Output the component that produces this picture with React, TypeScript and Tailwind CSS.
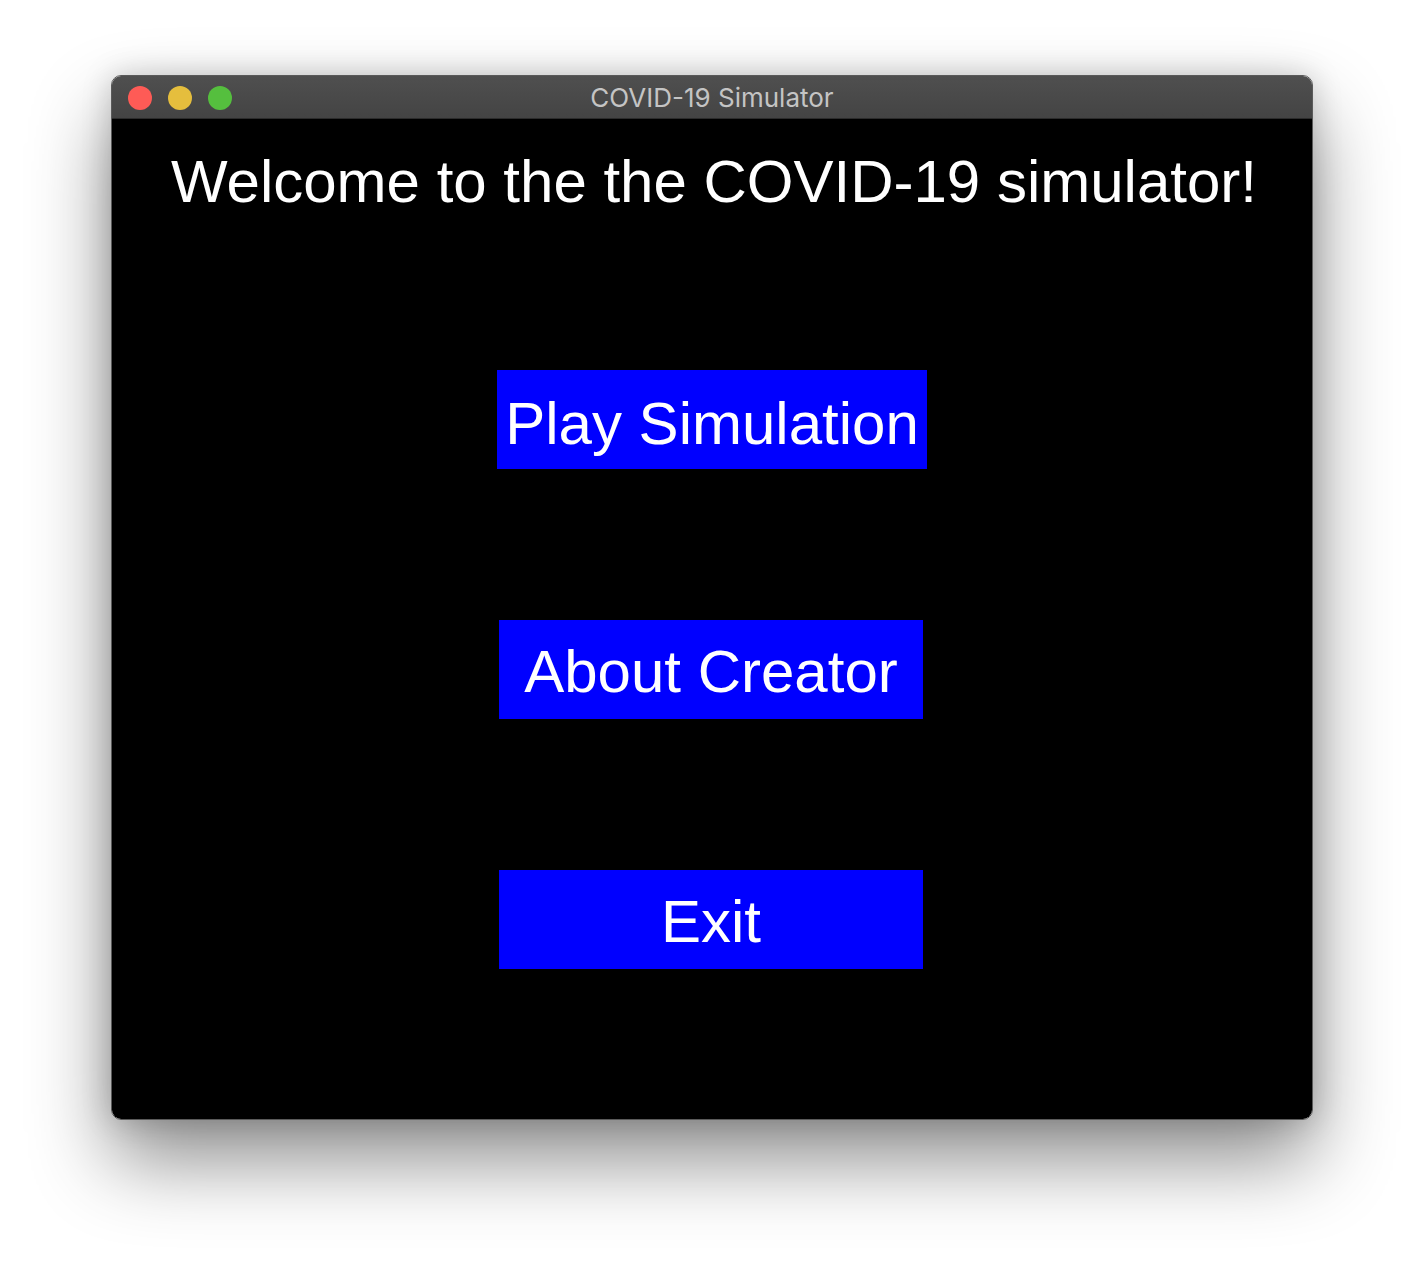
import React from "react";

const arial = { fontFamily: '"Liberation Sans", Arial, sans-serif' };

function MenuButton({ label, width, nudge }: { label: string; width: string; nudge: string }) {
    return (
        <button
            className={`${width} ${nudge} h-[99px] bg-[#0000ff] text-white text-[60px] leading-none flex items-center justify-center cursor-pointer`}
            style={arial}
        >
            {label}
        </button>
    );
}

export default function App() {
    return (
        <div className="w-[1424px] h-[1268px] bg-white pt-[75px] overflow-hidden">
            {/* window */}
            <div className="mx-auto w-[1202px] h-[1045px] rounded-[10px] border border-[#5a5a5a] overflow-hidden flex flex-col shadow-[0_40px_80px_rgba(0,0,0,0.45),0_0_30px_rgba(0,0,0,0.18)]">
                {/* title bar */}
                <div className="h-[43px] shrink-0 grid grid-cols-[1fr_auto_1fr] items-center bg-gradient-to-b from-[#4f4f4f] to-[#444444] border-b border-[#2c2c2c]">
                    <div className="flex items-center gap-[16px] pl-[16px] pt-[1px]">
                        <span className="w-[24px] h-[24px] rounded-full bg-[#fe5b56]" />
                        <span className="w-[24px] h-[24px] rounded-full bg-[#e5be3d]" />
                        <span className="w-[24px] h-[24px] rounded-full bg-[#55bf3e]" />
                    </div>
                    <div
                        className="text-[26px] text-[#c4c4c4] leading-none pt-[2px]"
                        style={{ fontFamily: 'Inter, "Noto Sans", sans-serif' }}
                    >
                        COVID-19 Simulator
                    </div>
                    <div />
                </div>

                {/* content */}
                <div className="flex-1 bg-black flex flex-col items-center">
                    <h1 className="mt-[33px] ml-[4px] text-[60px] leading-none text-white font-normal" style={arial}>
                        Welcome to the the COVID-19 simulator!
                    </h1>
                    <div className="mt-[158px] flex flex-col items-center gap-[151px]">
                        <MenuButton label="Play Simulation" width="w-[430px]" nudge="pt-[8px]" />
                        <MenuButton label="About Creator" width="w-[424px] mr-[2px]" nudge="pt-[4px]" />
                        <MenuButton label="Exit" width="w-[424px] mr-[2px]" nudge="pt-[4px]" />
                    </div>
                </div>
            </div>
        </div>
    );
}
